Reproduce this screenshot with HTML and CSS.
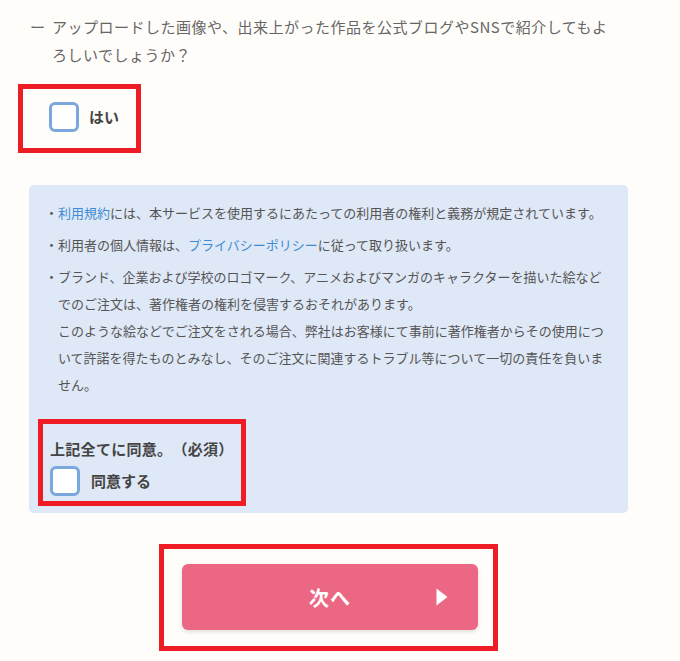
FILE: index.html
```html
<!DOCTYPE html>
<html lang="ja">
<head>
<meta charset="utf-8">
<link rel="stylesheet" href="styles.css">
</head>
<body>
<main class="form">
  <p class="question"><span class="dash">ー</span>アップロードした画像や、出来上がった作品を公式ブログやSNSで紹介してもよろしいでしょうか？</p>

  <div class="mark mark-yes">
    <label class="check">
      <span class="box"></span>
      <span class="check-text">はい</span>
    </label>
  </div>

  <section class="terms">
    <ul class="notes">
      <li><a class="link" href="#">利用規約</a>には、本サービスを使用するにあたっての利用者の権利と義務が規定されています。</li>
      <li>利用者の個人情報は、<a class="link" href="#">プライバシーポリシー</a>に従って取り扱います。</li>
      <li>ブランド、企業および学校のロゴマーク、アニメおよびマンガのキャラクターを描いた絵などでのご注文は、著作権者の権利を侵害するおそれがあります。<br>このような絵などでご注文をされる場合、弊社はお客様にて事前に著作権者からその使用について許諾を得たものとみなし、そのご注文に関連するトラブル等について一切の責任を負いません。</li>
    </ul>

    <div class="mark mark-agree">
      <div class="agree-title">上記全てに同意。（必須）</div>
      <label class="check">
        <span class="box"></span>
        <span class="check-text">同意する</span>
      </label>
    </div>
  </section>

  <div class="actions">
    <div class="mark mark-next">
      <button class="next" type="button">
        <span class="next-label">次へ</span>
        <svg class="next-arrow" width="12" height="18" viewBox="0 0 12 18"><path d="M0.5 0.5 L11.5 9 L0.5 17.5 Z" fill="#fff"/></svg>
      </button>
    </div>
  </div>
</main>
</body>
</html>
```

FILE: styles.css
```css
* { box-sizing: border-box; }

html, body {
  margin: 0;
  padding: 0;
  background: #fffdf9;
}

body {
  font-family: "Noto Sans CJK JP", "Noto Sans", sans-serif;
  color: #555;
  text-spacing-trim: space-all;
}

.form {
  width: 599px;
  margin-left: 29px;
  padding-top: 13px;
}

.question {
  margin: 0;
  padding: 0 15px 0 23px;
  text-indent: -22px;
  font-size: 15px;
  line-height: 28px;
  letter-spacing: 0.5px;
  color: #666;
}

.dash {
  display: inline-block;
  width: 22px;
  text-indent: 0;
  letter-spacing: 0;
}

.mark {
  border: 5px solid #ee1c25;
}

.mark-yes {
  display: inline-block;
  margin: 15px 0 0 -11px;
  width: 123px;
  padding: 13px 10px 16px 26px;
}

.check {
  display: flex;
  align-items: center;
  gap: 10px;
  cursor: pointer;
}

.box {
  width: 30px;
  height: 30px;
  flex: none;
  background: #fff;
  border: 3px solid #7aa8dc;
  border-radius: 6px;
}

.check-text {
  font-size: 15px;
  font-weight: 700;
  color: #444;
  line-height: 22px;
}

.terms {
  margin-top: 32px;
  background: #dfe8f6;
  border-radius: 5px;
  padding: 14px 18px 7px 16px;
}

.notes {
  list-style: none;
  margin: 0;
  padding: 0;
  font-size: 13px;
  line-height: 27px;
  color: #555;
}

.notes li {
  padding-left: 13px;
}

.notes li + li {
  margin-top: 5px;
}

.notes li::before {
  content: "・";
  display: inline-block;
  width: 13px;
  margin-left: -13px;
}

.link {
  color: #3d8bd4;
  text-decoration: none;
}

.mark-agree {
  display: inline-block;
  margin: 21px 0 0 -7px;
  padding: 14px 7px 5px 7px;
}

.agree-title {
  font-size: 15px;
  font-weight: 700;
  color: #444;
  line-height: 22px;
  letter-spacing: 0.3px;
  margin-bottom: 6px;
}

.mark-agree .check {
  gap: 11px;
}

.actions {
  display: flex;
  justify-content: center;
  margin-top: 31px;
}

.mark-next {
  padding: 15px 15px 16px 18px;
}

.next {
  position: relative;
  display: flex;
  align-items: center;
  justify-content: center;
  width: 296px;
  height: 66px;
  border: none;
  border-radius: 6px;
  background: #ec6783;
  box-shadow: 0 2px 4px rgba(0, 0, 0, 0.12);
  font-family: "Noto Sans CJK JP", "Noto Sans", sans-serif;
  cursor: pointer;
}

.next-label {
  font-size: 20px;
  font-weight: 700;
  color: #fff;
  letter-spacing: 1px;
}

.next-arrow {
  position: absolute;
  right: 30px;
  top: 24px;
}
```
